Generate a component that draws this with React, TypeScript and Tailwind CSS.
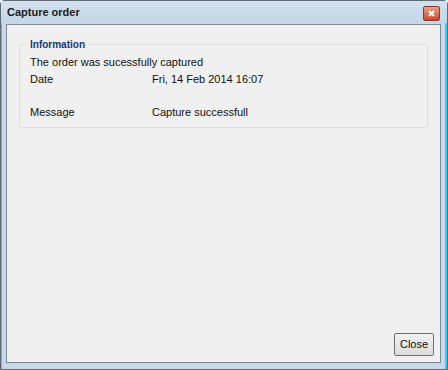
export default function App() {
  const rows: [string, string][] = [
    ['Date', 'Fri, 14 Feb 2014 16:07'],
    ['', ''],
    ['Message', 'Capture successfull'],
  ]

  return (
    <div
      className="w-[448px] h-[370px] flex flex-col bg-[#c9d9ea] border border-[#5f6b77] rounded-t-[4px] shadow-[inset_1px_0_0_#3cc8f4,inset_-2px_0_0_#3cc8f4]"
      style={{ fontFamily: '"Liberation Sans", Arial, sans-serif' }}
    >
      {/* Title bar */}
      <div className="h-[22px] flex items-center justify-between pl-[6px] pr-[7px] bg-gradient-to-b from-[#d3e1ef] to-[#c4d5e7]">
        <span className="text-[11px] font-bold text-[#1a1a1a]">Capture order</span>
        <button className="w-[17px] h-[15px] mt-[2px] rounded-[2px] border border-[#8a3a2a] bg-gradient-to-b from-[#e9a08c] to-[#c8452b] flex items-center justify-center">
          <svg width="7" height="7" viewBox="0 0 7 7">
            <path d="M1 1L6 6M6 1L1 6" stroke="#fff" strokeWidth="2" />
          </svg>
        </button>
      </div>

      {/* Body */}
      <div className="flex-1 mt-[1px] ml-[5px] mr-[6px] mb-[6px] border border-[#7d8a96] bg-[#f0f0f0] flex flex-col">
        <fieldset className="mt-[12px] mx-[12px] border border-[#dddddd] rounded-[2px] px-0 pb-[6px]">
          <legend className="ml-[7px] px-[3px] text-[10px] font-bold text-[#15397a]">Information</legend>
          <div className="px-[10px] pt-[2px] text-[11px] text-[#111] leading-[16.5px]">
            <div className="h-[17px]">The order was sucessfully captured</div>
            {rows.map(([label, value], i) => (
              <div key={i} className="grid grid-cols-[122px_1fr] h-[16.5px]">
                <span>{label}</span>
                <span>{value}</span>
              </div>
            ))}
          </div>
        </fieldset>

        <div className="flex-1" />

        <div className="flex justify-end pr-[6px] pb-[6px]">
          <button className="w-[40px] h-[23px] border border-[#707070] rounded-[2px] bg-gradient-to-b from-[#f2f2f2] to-[#dcdcdc] text-[11px] text-[#111]">
            Close
          </button>
        </div>
      </div>
    </div>
  )
}
